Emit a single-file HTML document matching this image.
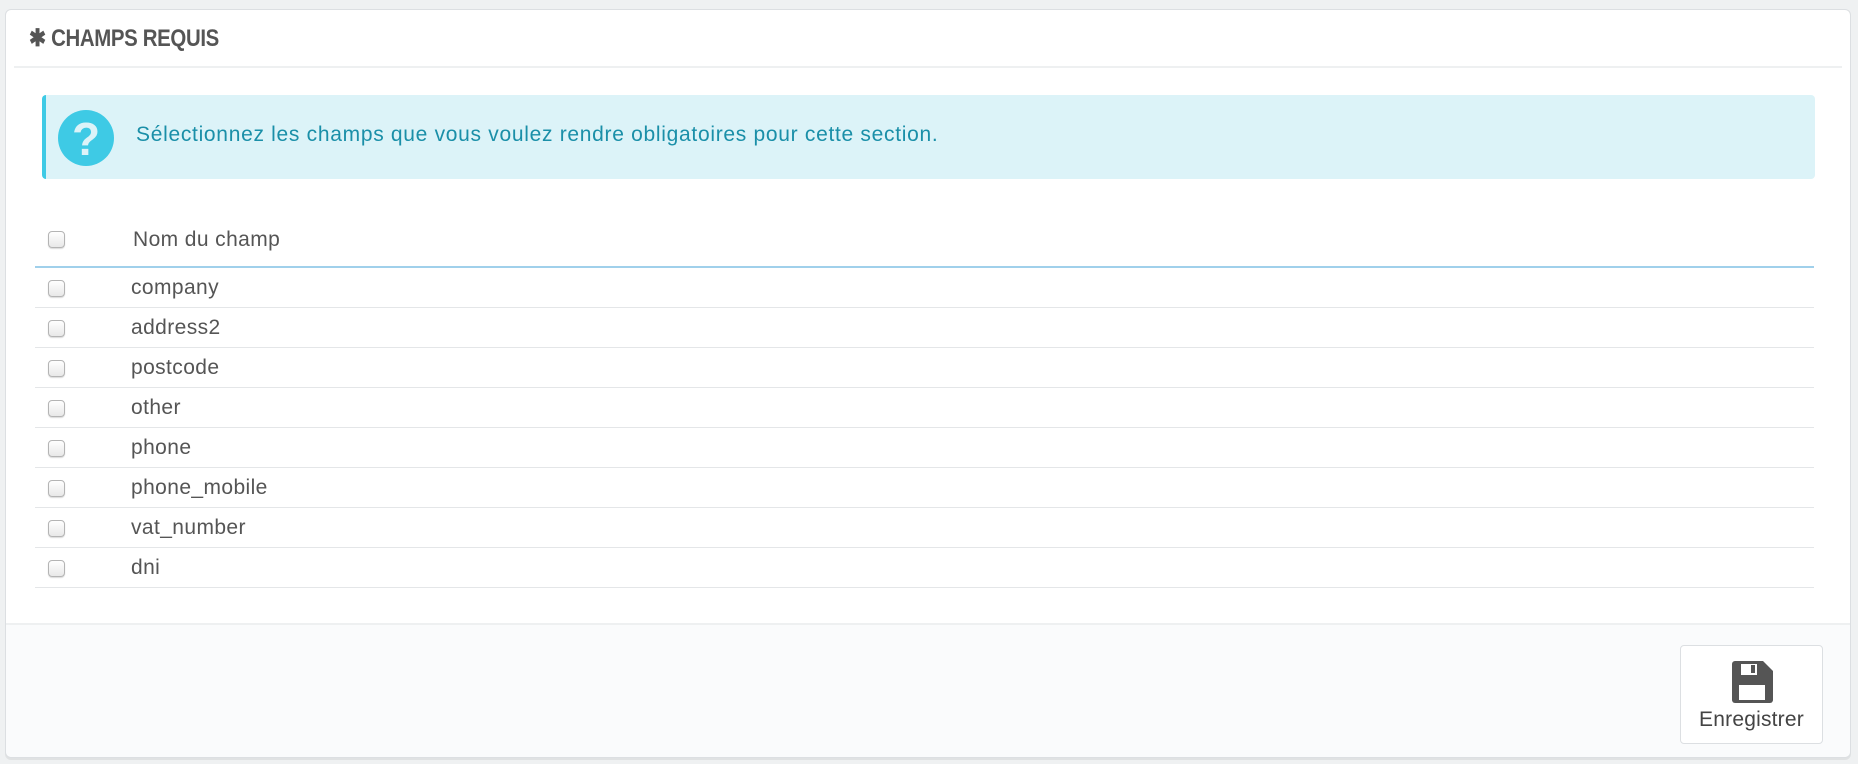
<!DOCTYPE html>
<html><head><meta charset="utf-8"><style>
*{box-sizing:border-box;margin:0;padding:0}
body{width:1858px;height:764px;background:#eff1f2;font-family:"Liberation Sans",sans-serif;color:#555;position:relative;overflow:hidden}
.panel{position:absolute;left:5px;top:9px;width:1846px;height:749px;background:#fff;border:1px solid #dcdfe2;border-radius:6px;box-shadow:0 2px 0 rgba(0,0,0,.06)}
.hd{position:absolute;left:8px;right:8px;top:0;height:58px;border-bottom:2px solid #eef0f1}
.hd span{position:absolute;left:15px;top:14px;font-family:"Liberation Sans Narrow","Liberation Sans",sans-serif;font-weight:bold;font-size:24px;color:#555;letter-spacing:-0.4px;transform:scaleX(0.85);transform-origin:left top;white-space:nowrap}
.alert{position:absolute;left:36px;top:85px;width:1773px;height:84px;background:#dcf3f8;border-left:4px solid #3ecae5;border-radius:4px}
.alert .ic{position:absolute;left:12px;top:15px;width:56px;height:56px;border-radius:50%;background:#3ecae5;color:#dcf3f8;font-weight:bold;font-size:46px;text-align:center;line-height:58px}
.alert .t{position:absolute;left:90px;top:28px;font-size:21px;letter-spacing:0.7px;color:#1a8fa8;white-space:nowrap}
.row{position:absolute;left:29px;width:1779px;height:40px;border-bottom:1px solid #e4e6e8}
.cb{position:absolute;left:13px;top:12px;width:17px;height:17px;border:1px solid #b4b4b4;border-radius:4px;background:linear-gradient(#fff,#e8e8e8);box-shadow:0 1px 1px rgba(0,0,0,.15)}
.row span{position:absolute;left:96px;top:8px;font-size:21px;letter-spacing:0.4px;color:#555}
.foot{position:absolute;left:0;right:0;bottom:0;height:134px;background:#fafbfc;border-top:2px solid #eef0f1;border-radius:0 0 6px 6px}
.btn{position:absolute;left:1674px;top:20px;width:143px;height:99px;border:1px solid #dcdfe2;border-radius:4px;background:#fff}
.btn span{position:absolute;left:0;right:0;top:62px;text-align:center;font-size:21px;letter-spacing:0.2px;color:#444}
</style></head><body>
<div class="panel">
<div class="hd"><span>✱ CHAMPS REQUIS</span></div>
<div class="alert"><div class="ic">?</div><div class="t">Sélectionnez les champs que vous voulez rendre obligatoires pour cette section.</div></div>
<div class="row" style="top:207px;height:51px;border-bottom:2px solid #a0d0eb"><div class="cb" style="top:14px"></div><span style="left:98px;top:11px">Nom du champ</span></div>
<div class="row" style="top:258px"><div class="cb"></div><span>company</span></div>
<div class="row" style="top:298px"><div class="cb"></div><span>address2</span></div>
<div class="row" style="top:338px"><div class="cb"></div><span>postcode</span></div>
<div class="row" style="top:378px"><div class="cb"></div><span>other</span></div>
<div class="row" style="top:418px"><div class="cb"></div><span>phone</span></div>
<div class="row" style="top:458px"><div class="cb"></div><span>phone_mobile</span></div>
<div class="row" style="top:498px"><div class="cb"></div><span>vat_number</span></div>
<div class="row" style="top:538px"><div class="cb"></div><span>dni</span></div>
<div class="foot"><div class="btn">
<svg style="position:absolute;left:49px;top:14px" width="44" height="44" viewBox="0 0 44 44"><path d="M2 4a3 3 0 0 1 3-3h28l10 10v29a3 3 0 0 1-3 3H5a3 3 0 0 1-3-3z" fill="#555"/><rect x="11" y="4" width="16" height="11" fill="#fff"/><rect x="21" y="5" width="4" height="8" fill="#555"/><rect x="9" y="25" width="26" height="15" fill="#fff"/></svg>
<span>Enregistrer</span></div></div>
</div>
</body></html>
